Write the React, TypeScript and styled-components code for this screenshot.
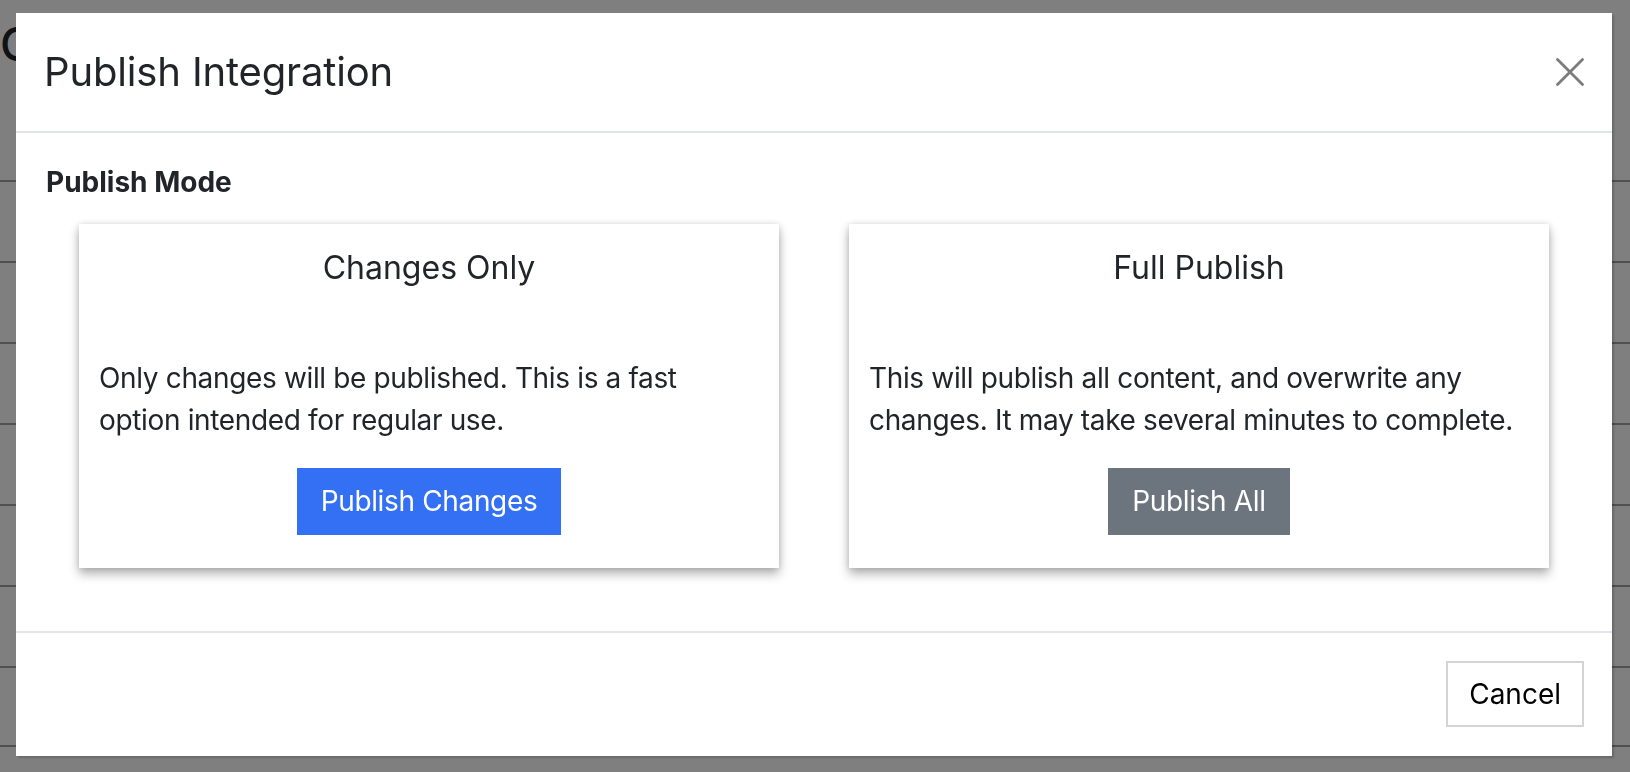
import React from "react";
import styled, { createGlobalStyle } from "styled-components";

const GlobalStyle = createGlobalStyle`
  html, body {
    margin: 0;
    padding: 0;
    width: 1630px;
    height: 772px;
    overflow: hidden;
    background: #ffffff;
    font-family: Inter, "Noto Sans", "Liberation Sans", sans-serif;
    color: #212529;
  }
  * { box-sizing: border-box; }
`;

const Page = styled.div`
  padding-top: 17px;
  width: 1630px;
  height: 772px;
  overflow: hidden;
`;

const PageHeading = styled.h1`
  margin: 0;
  font-size: 46px;
  line-height: 55px;
  font-weight: 500;
  color: #212529;
`;

const Table = styled.div`
  margin-top: 108px;
  display: flex;
  flex-direction: column;
`;

const TableRow = styled.div`
  height: 81px;
  border-top: 2px solid #a0a0a0;

  &:last-child {
    border-bottom: 2px solid #a0a0a0;
  }
`;

const Backdrop = styled.div`
  position: fixed;
  inset: 0;
  background: rgba(0, 0, 0, 0.5);
  display: flex;
  align-items: flex-start;
  padding: 13px 0 0 16px;
`;

const Modal = styled.div`
  width: 1596px;
  background: #ffffff;
  display: flex;
  flex-direction: column;
  box-shadow: 2px 2px 2px rgba(0, 0, 0, 0.18);
`;

const Header = styled.div`
  display: flex;
  align-items: center;
  justify-content: space-between;
  padding: 29px 28px 29px 28px;
  border-bottom: 2px solid #e1e4e8;
`;

const Title = styled.h5`
  margin: 0;
  font-size: 40px;
  line-height: 60px;
  font-weight: 400;
  letter-spacing: -0.15px;
  color: #212529;
`;

const CloseButton = styled.button`
  width: 28px;
  height: 28px;
  padding: 0;
  border: 0;
  background: transparent;
  display: flex;
  align-items: center;
  justify-content: center;
  cursor: pointer;
`;

const Body = styled.div`
  padding: 28px 30px 63px;
  display: flex;
  flex-direction: column;
  gap: 21px;
`;

const SectionLabel = styled.div`
  font-size: 28px;
  line-height: 42px;
  font-weight: 700;
  color: #212529;
`;

const CardGrid = styled.div`
  display: grid;
  grid-template-columns: 1fr 1fr;
  column-gap: 70px;
  padding: 0 33px;
`;

const Card = styled.div`
  background: #ffffff;
  height: 344px;
  padding: 25px 20px 33px;
  display: flex;
  flex-direction: column;
  box-shadow: 0 6px 10px rgba(0, 0, 0, 0.3), 0 0 6px rgba(0, 0, 0, 0.12);
`;

const CardTitle = styled.div`
  font-size: 32px;
  line-height: 38px;
  text-align: center;
  color: #212529;
  margin-bottom: 70px;
`;

const CardText = styled.p`
  margin: 0 0 27px;
  font-size: 28px;
  line-height: 42px;
  letter-spacing: -0.35px;
  color: #212529;
`;

const ActionButton = styled.button<{ $variant: "primary" | "secondary" }>`
  align-self: center;
  border: 0;
  padding: 12px 24px;
  font-family: inherit;
  font-size: 28px;
  line-height: 43px;
  letter-spacing: -0.35px;
  color: #ffffff;
  background: ${(p) => (p.$variant === "primary" ? "#3370f4" : "#6c757d")};
  cursor: pointer;
`;

const Footer = styled.div`
  display: flex;
  justify-content: flex-end;
  padding: 28px 28px 29px;
  border-top: 2px solid #e1e4e8;
`;

const CancelButton = styled.button`
  border: 2px solid #d4d4d4;
  background: #ffffff;
  padding: 10px 21px;
  font-family: inherit;
  font-size: 28px;
  line-height: 42px;
  color: #000000;
  cursor: pointer;
`;

const CloseIcon = () => (
  <svg width="28" height="28" viewBox="0 0 28 28" fill="none">
    <path d="M1.5 1.5 L26.5 26.5 M26.5 1.5 L1.5 26.5" stroke="#7b7b7b" strokeWidth="2.8" strokeLinecap="round" />
  </svg>
);

const options = [
  {
    title: "Changes Only",
    text: "Only changes will be published. This is a fast option intended for regular use.",
    action: "Publish Changes",
    variant: "primary" as const,
  },
  {
    title: "Full Publish",
    text: "This will publish all content, and overwrite any changes. It may take several minutes to complete.",
    action: "Publish All",
    variant: "secondary" as const,
  },
];

export default function App() {
  return (
    <>
      <GlobalStyle />
      <Page>
        <PageHeading>C</PageHeading>
        <Table>
          {Array.from({ length: 7 }).map((_, i) => (
            <TableRow key={i} />
          ))}
        </Table>
      </Page>
      <Backdrop>
        <Modal>
          <Header>
            <Title>Publish Integration</Title>
            <CloseButton aria-label="Close">
              <CloseIcon />
            </CloseButton>
          </Header>
          <Body>
            <SectionLabel>Publish Mode</SectionLabel>
            <CardGrid>
              {options.map((o) => (
                <Card key={o.title}>
                  <CardTitle>{o.title}</CardTitle>
                  <CardText>{o.text}</CardText>
                  <ActionButton $variant={o.variant}>{o.action}</ActionButton>
                </Card>
              ))}
            </CardGrid>
          </Body>
          <Footer>
            <CancelButton>Cancel</CancelButton>
          </Footer>
        </Modal>
      </Backdrop>
    </>
  );
}
